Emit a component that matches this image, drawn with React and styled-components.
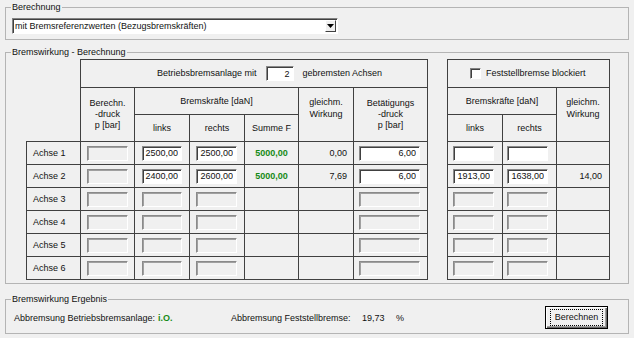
import React from "react";
import styled, { createGlobalStyle } from "styled-components";

const GlobalStyle = createGlobalStyle`
  html, body { margin: 0; padding: 0; background: #f0f0f0; }
  body {
    font-family: "Liberation Sans", Arial, sans-serif;
    font-size: 9px;
    color: #111;
  }
`;

const Window = styled.div`
  width: 634px;
  height: 338px;
  box-sizing: border-box;
  padding: 0 5px;
  background: #f0f0f0;
  overflow: hidden;
`;

const Group = styled.fieldset`
  margin: ${p => p.$mt}px 0 0 0;
  padding: 0;
  border: 1px solid #b4b4b4;
  min-width: 0;
`;

const Legend = styled.legend`
  margin-left: 5px;
  padding: 0 1px;
  line-height: 12px;
  font-size: 9px;
`;

const Body = styled.div`
  padding: ${p => p.$pad};
`;

const Combo = styled.div`
  width: 326px;
  height: 16px;
  box-sizing: border-box;
  background: #fff;
  border: 1px solid;
  border-color: #828282 #fff #fff #828282;
  box-shadow: inset 1px 1px 0 #404040;
  display: flex;
  align-items: center;
`;

const ComboText = styled.span`
  flex: 1;
  padding-left: 2px;
  line-height: 14px;
`;

const ComboArrow = styled.div`
  width: 11px;
  height: 12px;
  margin-right: 1px;
  box-sizing: border-box;
  background: #f0f0f0;
  border: 1px solid;
  border-color: #fff #404040 #404040 #fff;
  display: flex;
  align-items: center;
  justify-content: center;
`;

const Tables = styled.div`
  display: flex;
  gap: 19px;
  align-items: flex-start;
`;

const Grid = styled.table`
  border-collapse: collapse;
  table-layout: fixed;
  width: ${p => p.$w}px;
  font-size: 9px;
`;

const Row = styled.tr`
  height: ${p => p.$h}px;
`;

const Cell = styled.td`
  border: 1px solid #404040;
  padding: ${p => p.$pt || 0}px ${p => p.$pr || 0}px 0 ${p => p.$pl || 0}px;
  text-align: ${p => p.$align || "center"};
  vertical-align: ${p => p.$valign || "middle"};
  line-height: ${p => p.$lh || 11}px;
  white-space: nowrap;
`;

const Corner = styled.td`
  border: none;
  padding: 0;
`;

const Field = styled.input`
  display: block;
  width: ${p => p.$w}px;
  height: 15px;
  box-sizing: border-box;
  margin: 0;
  padding: 0 3px 0 0;
  font: inherit;
  font-size: 9px;
  text-align: right;
  color: #111;
  background: ${p => (p.$on ? "#fff" : "#f0f0f0")};
  border: 1px solid;
  border-color: #8a8a8a #fff #fff #8a8a8a;
  box-shadow: inset 1px 1px 0 ${p => (p.$on ? "#404040" : "#a0a0a0")};
  outline: none;
`;

const Inline = styled.div`
  display: flex;
  align-items: center;
  justify-content: flex-start;
  padding-left: ${p => p.$pl}px;
  gap: ${p => p.$gap}px;
`;

const Check = styled.span`
  display: inline-block;
  width: 11px;
  height: 11px;
  box-sizing: border-box;
  background: #fff;
  border: 1px solid;
  border-color: #808080 #fff #fff #808080;
  box-shadow: inset 1px 1px 0 #404040;
`;

const Green = styled.span`
  color: #168a16;
  font-weight: bold;
`;

const ResultRow = styled.div`
  display: flex;
  align-items: center;
  height: 100%;
`;

const Label = styled.span`
  width: ${p => (p.$w ? `${p.$w}px` : "auto")};
  flex: none;
  white-space: nowrap;
`;

const Button = styled.button`
  margin-left: auto;
  margin-right: 20px;
  width: 63px;
  height: 23px;
  box-sizing: border-box;
  font: inherit;
  font-size: 9px;
  color: #111;
  background: #f0f0f0;
  border: 1px solid #000;
  box-shadow: inset 1px 1px 0 #fff, inset -1px -1px 0 #696969, inset -2px -2px 0 #a0a0a0;
  padding: 0;
  display: flex;
  align-items: center;
  justify-content: center;
`;

const Focus = styled.span`
  border: 1px dotted #000;
  padding: 2px 4px;
  line-height: 11px;
`;

const rows = [
  { n: 1, on: true, links: "2500,00", rechts: "2500,00", summe: "5000,00", gl: "0,00", bet: "6,00", fl: "", fr: "", fg: "" },
  { n: 2, on: true, links: "2400,00", rechts: "2600,00", summe: "5000,00", gl: "7,69", bet: "6,00", fl: "1913,00", fr: "1638,00", fg: "14,00" },
  { n: 3 }, { n: 4 }, { n: 5 }, { n: 6 },
];

const Betrieb = () => (
  <Grid $w={401}>
    <colgroup>
      <col style={{ width: 54 }} />
      <col style={{ width: 54 }} />
      <col style={{ width: 55 }} />
      <col style={{ width: 55 }} />
      <col style={{ width: 54 }} />
      <col style={{ width: 55 }} />
      <col style={{ width: 74 }} />
    </colgroup>
    <tbody>
      <Row $h={28}>
        <Corner rowSpan={3} />
        <Cell colSpan={6}>
          <Inline $pl={76} $gap={9}>
            <span>Betriebsbremsanlage mit</span>
            <Field $w={28} $on readOnly value="2" />
            <span>gebremsten Achsen</span>
          </Inline>
        </Cell>
      </Row>
      <Row $h={27}>
        <Cell rowSpan={2}>Berechn.<br />-druck<br />p [bar]</Cell>
        <Cell colSpan={3}>Bremskräfte [daN]</Cell>
        <Cell rowSpan={2} $valign="top" $pt={8} $lh={12}>gleichm.<br />Wirkung</Cell>
        <Cell rowSpan={2}>Betätigungs<br />-druck<br />p [bar]</Cell>
      </Row>
      <Row $h={27}>
        <Cell>links</Cell>
        <Cell>rechts</Cell>
        <Cell>Summe F</Cell>
      </Row>
      {rows.map(r => (
        <Row $h={23} key={r.n}>
          <Cell $align="left" $pl={6}>Achse {r.n}</Cell>
          <Cell $align="left" $pl={6}><Field $w={41} readOnly value="" /></Cell>
          <Cell $align="left" $pl={7}><Field $w={40} $on={r.on} readOnly value={r.links || ""} /></Cell>
          <Cell $align="left" $pl={6}><Field $w={41} $on={r.on} readOnly value={r.rechts || ""} /></Cell>
          <Cell>{r.summe && <Green>{r.summe}</Green>}</Cell>
          <Cell $align="right" $pr={6}>{r.gl}</Cell>
          <Cell $align="left" $pl={5}><Field $w={61} $on={r.on} readOnly value={r.bet || ""} /></Cell>
        </Row>
      ))}
    </tbody>
  </Grid>
);

const Feststell = () => (
  <Grid $w={162}>
    <colgroup>
      <col style={{ width: 55 }} />
      <col style={{ width: 54 }} />
      <col style={{ width: 53 }} />
    </colgroup>
    <tbody>
      <Row $h={28}>
        <Cell colSpan={3}>
          <Inline $pl={22} $gap={5}>
            <Check />
            <span>Feststellbremse blockiert</span>
          </Inline>
        </Cell>
      </Row>
      <Row $h={27}>
        <Cell colSpan={2}>Bremskräfte [daN]</Cell>
        <Cell rowSpan={2} $valign="top" $pt={8} $lh={12}>gleichm.<br />Wirkung</Cell>
      </Row>
      <Row $h={27}>
        <Cell>links</Cell>
        <Cell>rechts</Cell>
      </Row>
      {rows.map(r => (
        <Row $h={23} key={r.n}>
          <Cell $align="left" $pl={5}><Field $w={41} $on={r.on} readOnly value={r.fl || ""} /></Cell>
          <Cell $align="left" $pl={4}><Field $w={41} $on={r.on} readOnly value={r.fr || ""} /></Cell>
          <Cell $align="right" $pr={7}>{r.fg}</Cell>
        </Row>
      ))}
    </tbody>
  </Grid>
);

export default function App() {
  return (
    <>
      <GlobalStyle />
      <Window>
        <Group $mt={1}>
          <Legend>Berechnung</Legend>
          <Body $pad="5px 0 5px 6px">
            <Combo>
              <ComboText>mit Bremsreferenzwerten (Bezugsbremskräften)</ComboText>
              <ComboArrow>
                <svg width="7" height="4" viewBox="0 0 7 4">
                  <polygon points="0,0 7,0 3.5,4" fill="#000" />
                </svg>
              </ComboArrow>
            </Combo>
          </Body>
        </Group>
        <Group $mt={6}>
          <Legend>Bremswirkung - Berechnung</Legend>
          <Body $pad="1px 0 3px 20px">
            <Tables>
              <Betrieb />
              <Feststell />
            </Tables>
          </Body>
        </Group>
        <Group $mt={9}>
          <Legend>Bremswirkung Ergebnis</Legend>
          <Body $pad="1px 0 4px 8px">
            <ResultRow>
              <Label $w={144}>Abbremsung Betriebsbremsanlage:</Label>
              <Label $w={73}><Green>i.O.</Green></Label>
              <Label $w={131}>Abbremsung Feststellbremse:</Label>
              <Label $w={34}>19,73</Label>
              <Label>%</Label>
              <Button><Focus>Berechnen</Focus></Button>
            </ResultRow>
          </Body>
        </Group>
      </Window>
    </>
  );
}
